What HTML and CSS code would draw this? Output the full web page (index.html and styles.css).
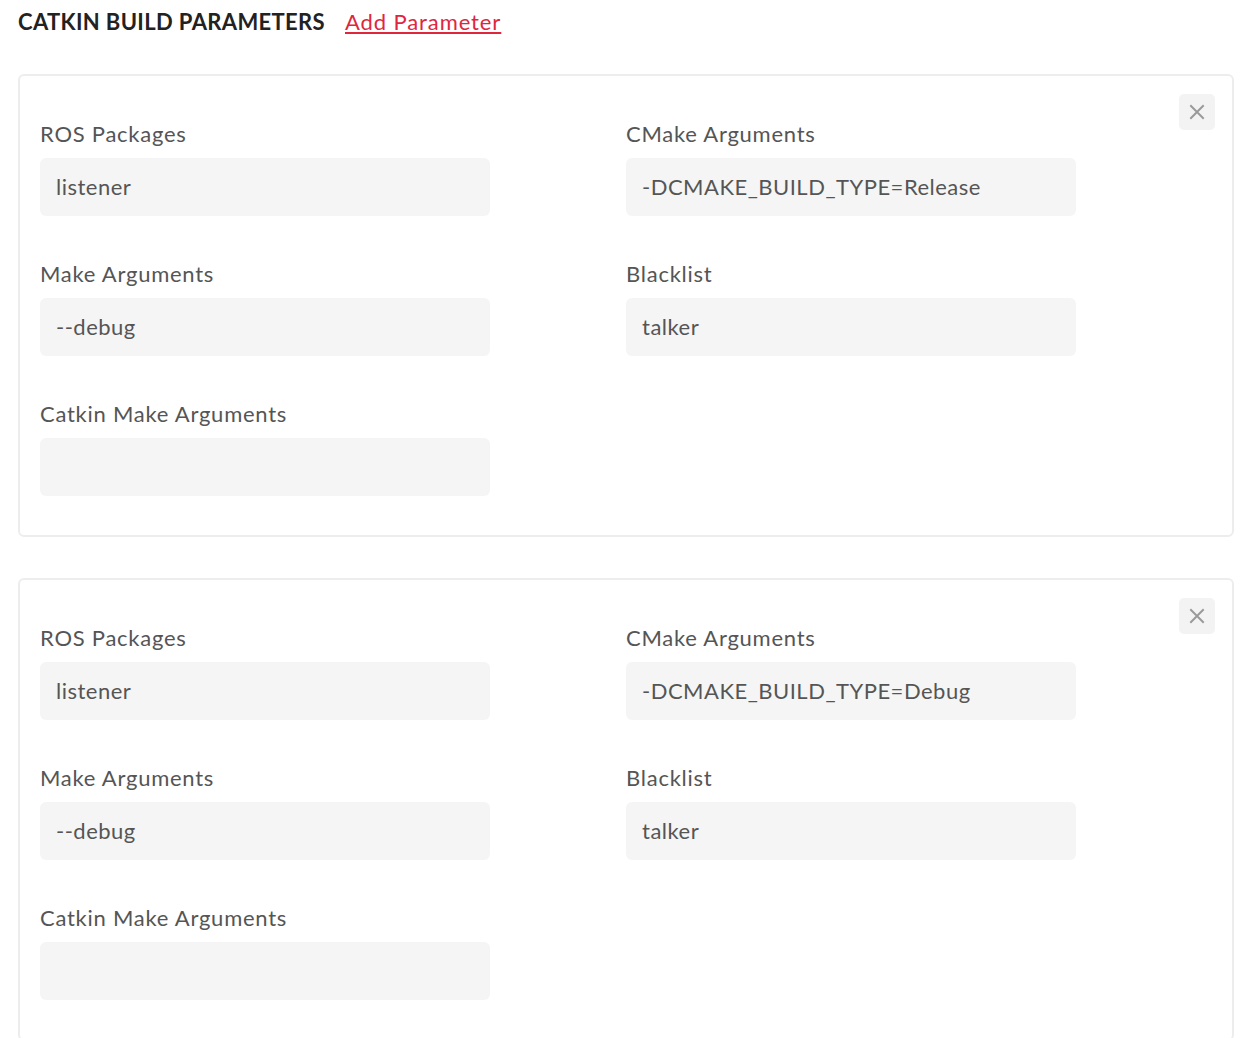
FILE: index.html
```html
<!DOCTYPE html>
<html>
<head>
<meta charset="utf-8">
<link rel="stylesheet" href="styles.css">
</head>
<body>
<div class="page">
  <div class="header">
    <h2 class="title">CATKIN BUILD PARAMETERS</h2>
    <a class="add-link" href="#">Add Parameter</a>
  </div>

  <div class="card">
    <button class="close" type="button" aria-label="Remove">
      <svg width="16" height="16" viewBox="0 0 16 16"><path d="M2 2 L14 14 M14 2 L2 14" stroke="#9a9a9a" stroke-width="2" stroke-linecap="square" fill="none"/></svg>
    </button>
    <div class="grid">
      <div class="field"><label class="label">ROS Packages</label><div class="input">listener</div></div>
      <div class="field"><label class="label">CMake Arguments</label><div class="input">-DCMAKE_BUILD_TYPE=Release</div></div>
      <div class="field"><label class="label">Make Arguments</label><div class="input">--debug</div></div>
      <div class="field"><label class="label">Blacklist</label><div class="input">talker</div></div>
      <div class="field"><label class="label">Catkin Make Arguments</label><div class="input"></div></div>
    </div>
  </div>

  <div class="card">
    <button class="close" type="button" aria-label="Remove">
      <svg width="16" height="16" viewBox="0 0 16 16"><path d="M2 2 L14 14 M14 2 L2 14" stroke="#9a9a9a" stroke-width="2" stroke-linecap="square" fill="none"/></svg>
    </button>
    <div class="grid">
      <div class="field"><label class="label">ROS Packages</label><div class="input">listener</div></div>
      <div class="field"><label class="label">CMake Arguments</label><div class="input">-DCMAKE_BUILD_TYPE=Debug</div></div>
      <div class="field"><label class="label">Make Arguments</label><div class="input">--debug</div></div>
      <div class="field"><label class="label">Blacklist</label><div class="input">talker</div></div>
      <div class="field"><label class="label">Catkin Make Arguments</label><div class="input"></div></div>
    </div>
  </div>
</div>
</body>
</html>
```

FILE: styles.css
```css
* { box-sizing: border-box; }

body {
  margin: 0;
  background: #fff;
  font-family: Lato, "Liberation Sans", sans-serif;
  color: #555;
}

.page {
  padding: 8px 16px 0 18px;
}

.header {
  display: flex;
  align-items: baseline;
  gap: 20px;
  height: 28px;
  margin-bottom: 38px;
}

.title {
  margin: 0;
  font-size: 22px;
  line-height: 28px;
  font-weight: 700;
  color: #222;
  letter-spacing: 0.35px;
}

.add-link {
  font-size: 22px;
  line-height: 28px;
  color: #e0263d;
  letter-spacing: 0.9px;
  text-decoration: underline;
  text-underline-offset: 2px;
}

.card {
  position: relative;
  border: 2px solid #ededed;
  border-radius: 6px;
  padding: 44px 20px 39px 20px;
  margin-bottom: 41px;
}

.close {
  position: absolute;
  top: 18px;
  right: 17px;
  width: 36px;
  height: 36px;
  border: 0;
  border-radius: 5px;
  background: #f3f3f3;
  padding: 0;
  display: flex;
  align-items: center;
  justify-content: center;
}

.grid {
  display: grid;
  grid-template-columns: 1fr 1fr;
  row-gap: 44px;
}

.field {
  display: flex;
  flex-direction: column;
}

.label {
  font-size: 22px;
  line-height: 28px;
  color: #555;
  letter-spacing: 0.75px;
  margin-bottom: 10px;
}

.input {
  width: 450px;
  height: 58px;
  background: #f5f5f5;
  border-radius: 6px;
  padding: 0 16px;
  font-size: 22px;
  line-height: 58px;
  letter-spacing: 0.5px;
  color: #555;
}
```
